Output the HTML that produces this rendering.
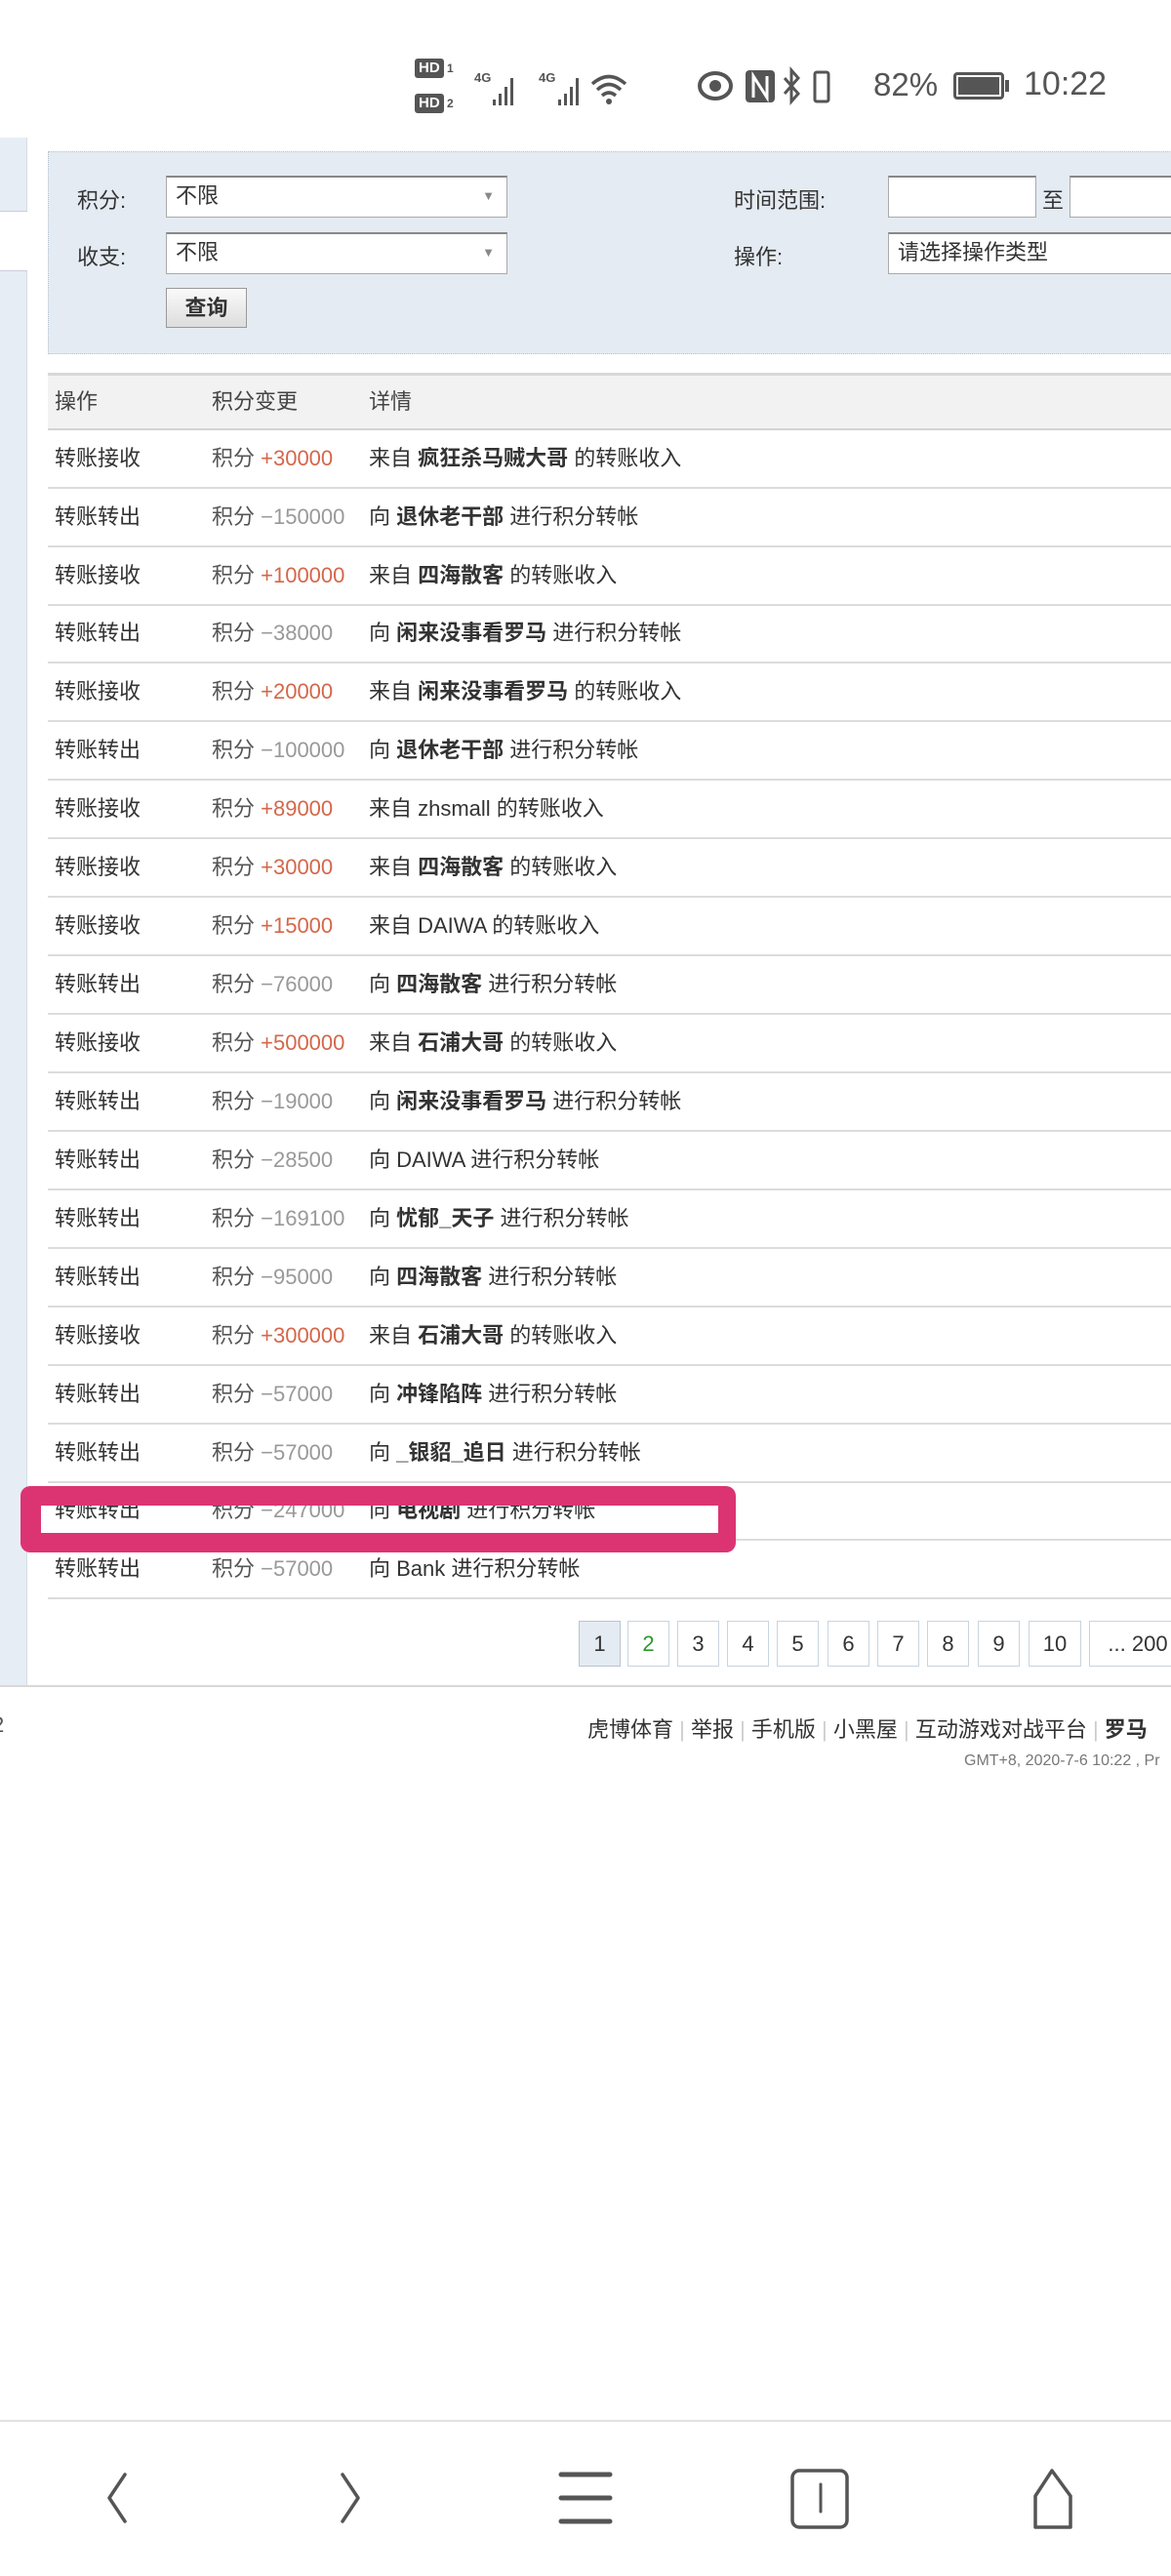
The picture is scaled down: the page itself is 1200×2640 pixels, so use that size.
<!DOCTYPE html>
<html><head><meta charset="utf-8"><style>
*{margin:0;padding:0;box-sizing:border-box}
body{width:1200px;height:2640px;background:#fff;position:relative;overflow:hidden;font-family:"Liberation Sans","Noto Sans CJK SC",sans-serif;color:#333}
.abs{position:absolute}
.strip{left:0;top:141px;width:28px;height:1588px;background:#e6edf5;border-right:1px solid #d5dde6}
.filter{left:49px;top:155px;width:1160px;height:208px;background:#e4ebf2;border:1px dotted #b8c4d0}
.lbl{font-size:22px;color:#333}
.sel{background:#fff;border:1px solid #aaa;border-top:2px solid #888;font-size:22px;padding-left:9px;line-height:38px}
.btn{left:170px;top:295px;width:83px;height:41px;border:1px solid #999;background:linear-gradient(#fafafa,#ddd);font-size:22px;font-weight:bold;text-align:center;line-height:39px}
.thead{left:49px;top:382px;width:1160px;height:59px;background:#f2f2f2;border-top:3px solid #d8d8d8;border-bottom:2px solid #d4d4d4;font-size:22px;color:#444}
.row{position:absolute;left:49px;width:1160px;height:59.9px;border-bottom:2px solid #dcdcdc;font-size:22px}
.c{position:absolute;top:0;line-height:58px;white-space:nowrap}
.c1{left:7px}.c2{left:168px;color:#555}.c3{left:329px}
.p{color:#d4674a}.m{color:#999}
b{color:#333}
.pg{position:absolute;top:1661px;height:47px;border:1px solid #c8d4e0;font-size:22px;text-align:center;line-height:45px;background:#fff}
</style></head><body>

<!-- status bar -->
<div class="abs" style="left:425px;top:60px;font-size:15px;font-weight:bold;color:#555">
<div style="border:2px solid #555;border-radius:3px;padding:0 2px;line-height:16px;display:inline-block;background:#555;color:#fff">HD</div><span style="font-size:12px"> 1</span></div>
<div class="abs" style="left:425px;top:96px;font-size:15px;font-weight:bold;color:#555">
<div style="border:2px solid #555;border-radius:3px;padding:0 2px;line-height:16px;display:inline-block;background:#555;color:#fff">HD</div><span style="font-size:12px"> 2</span></div>
<svg class="abs" style="left:484px;top:66px" width="190" height="46" viewBox="0 0 190 46">
<text x="2" y="18" font-size="13" fill="#555" font-family="Liberation Sans" font-weight="bold">4G</text>
<rect x="21" y="36" width="3" height="6" fill="#555"/><rect x="27" y="30" width="3" height="12" fill="#555"/><rect x="33" y="23" width="3" height="19" fill="#555"/><rect x="39" y="14" width="3" height="28" fill="#555"/>
<text x="68" y="18" font-size="13" fill="#555" font-family="Liberation Sans" font-weight="bold">4G</text>
<rect x="88" y="36" width="3" height="6" fill="#555"/><rect x="94" y="30" width="3" height="12" fill="#555"/><rect x="100" y="23" width="3" height="19" fill="#555"/><rect x="106" y="14" width="3" height="28" fill="#555"/>
<path d="M123 20 Q140 5 157 20 M128 26 Q140 15 152 26 M133 32 Q140 26 147 32" stroke="#555" stroke-width="3.5" fill="none"/><circle cx="140" cy="38" r="3" fill="#555"/>
</svg>
<svg class="abs" style="left:714px;top:68px" width="140" height="42" viewBox="0 0 140 42">
<ellipse cx="19" cy="20" rx="16" ry="13" stroke="#555" stroke-width="4" fill="none"/><circle cx="19" cy="20" r="6" fill="#555"/>
<rect x="50" y="4" width="30" height="33" rx="4" fill="#555"/><path d="M58 32 V10 L72 32 V10" stroke="#fff" stroke-width="3" fill="none"/>
<path d="M90 12 L104 28 L97 36 V4 L104 12 L90 28" stroke="#555" stroke-width="3" fill="none"/>
<rect x="121" y="6" width="14" height="30" rx="2" stroke="#555" stroke-width="3" fill="none"/>
</svg>
<div class="abs" style="left:895px;top:68px;font-size:33px;color:#555">82%</div>
<div class="abs" style="left:977px;top:74px;width:52px;height:28px;border:3px solid #555;border-radius:4px;padding:2px"><div style="background:#555;width:100%;height:100%"></div></div>
<div class="abs" style="left:1030px;top:82px;width:4px;height:12px;background:#555"></div>
<div class="abs" style="left:1049px;top:67px;font-size:34px;color:#555">10:22</div>

<!-- left strip -->
<div class="abs strip"></div>
<div class="abs" style="left:0;top:216px;width:28px;height:62px;background:#fff;border-top:1px solid #ccd;border-bottom:1px solid #ccd"></div>

<!-- filter -->
<div class="abs filter"></div>
<div class="abs lbl" style="left:79px;top:188px">积分:</div>
<div class="abs sel" style="left:170px;top:180px;width:350px;height:43px">不限<span style="position:absolute;right:12px;top:0;font-size:13px;color:#888">▼</span></div>
<div class="abs lbl" style="left:79px;top:246px">收支:</div>
<div class="abs sel" style="left:170px;top:238px;width:350px;height:43px">不限<span style="position:absolute;right:12px;top:0;font-size:13px;color:#888">▼</span></div>
<div class="abs btn">查询</div>
<div class="abs lbl" style="left:752px;top:188px">时间范围:</div>
<div class="abs sel" style="left:910px;top:180px;width:152px;height:43px"></div>
<div class="abs lbl" style="left:1068px;top:188px">至</div>
<div class="abs sel" style="left:1096px;top:180px;width:120px;height:43px"></div>
<div class="abs lbl" style="left:752px;top:246px">操作:</div>
<div class="abs sel" style="left:910px;top:238px;width:300px;height:43px">请选择操作类型</div>

<!-- table -->
<div class="abs thead"><span class="c c1" style="line-height:54px">操作</span><span class="c" style="left:168px;line-height:54px">积分变更</span><span class="c c3" style="line-height:54px">详情</span></div>

<div class="row" style="top:441px"><span class="c c1">转账接收</span><span class="c c2">积分 <span class="p">+30000</span></span><span class="c c3">来自 <b>疯狂杀马贼大哥</b> 的转账收入</span></div>
<div class="row" style="top:501px"><span class="c c1">转账转出</span><span class="c c2">积分 <span class="m">−150000</span></span><span class="c c3">向 <b>退休老干部</b> 进行积分转帐</span></div>
<div class="row" style="top:561px"><span class="c c1">转账接收</span><span class="c c2">积分 <span class="p">+100000</span></span><span class="c c3">来自 <b>四海散客</b> 的转账收入</span></div>
<div class="row" style="top:620px"><span class="c c1">转账转出</span><span class="c c2">积分 <span class="m">−38000</span></span><span class="c c3">向 <b>闲来没事看罗马</b> 进行积分转帐</span></div>
<div class="row" style="top:680px"><span class="c c1">转账接收</span><span class="c c2">积分 <span class="p">+20000</span></span><span class="c c3">来自 <b>闲来没事看罗马</b> 的转账收入</span></div>
<div class="row" style="top:740px"><span class="c c1">转账转出</span><span class="c c2">积分 <span class="m">−100000</span></span><span class="c c3">向 <b>退休老干部</b> 进行积分转帐</span></div>
<div class="row" style="top:800px"><span class="c c1">转账接收</span><span class="c c2">积分 <span class="p">+89000</span></span><span class="c c3">来自 zhsmall 的转账收入</span></div>
<div class="row" style="top:860px"><span class="c c1">转账接收</span><span class="c c2">积分 <span class="p">+30000</span></span><span class="c c3">来自 <b>四海散客</b> 的转账收入</span></div>
<div class="row" style="top:920px"><span class="c c1">转账接收</span><span class="c c2">积分 <span class="p">+15000</span></span><span class="c c3">来自 DAIWA 的转账收入</span></div>
<div class="row" style="top:980px"><span class="c c1">转账转出</span><span class="c c2">积分 <span class="m">−76000</span></span><span class="c c3">向 <b>四海散客</b> 进行积分转帐</span></div>
<div class="row" style="top:1040px"><span class="c c1">转账接收</span><span class="c c2">积分 <span class="p">+500000</span></span><span class="c c3">来自 <b>石浦大哥</b> 的转账收入</span></div>
<div class="row" style="top:1100px"><span class="c c1">转账转出</span><span class="c c2">积分 <span class="m">−19000</span></span><span class="c c3">向 <b>闲来没事看罗马</b> 进行积分转帐</span></div>
<div class="row" style="top:1160px"><span class="c c1">转账转出</span><span class="c c2">积分 <span class="m">−28500</span></span><span class="c c3">向 DAIWA 进行积分转帐</span></div>
<div class="row" style="top:1220px"><span class="c c1">转账转出</span><span class="c c2">积分 <span class="m">−169100</span></span><span class="c c3">向 <b>忧郁_天子</b> 进行积分转帐</span></div>
<div class="row" style="top:1280px"><span class="c c1">转账转出</span><span class="c c2">积分 <span class="m">−95000</span></span><span class="c c3">向 <b>四海散客</b> 进行积分转帐</span></div>
<div class="row" style="top:1340px"><span class="c c1">转账接收</span><span class="c c2">积分 <span class="p">+300000</span></span><span class="c c3">来自 <b>石浦大哥</b> 的转账收入</span></div>
<div class="row" style="top:1400px"><span class="c c1">转账转出</span><span class="c c2">积分 <span class="m">−57000</span></span><span class="c c3">向 <b>冲锋陷阵</b> 进行积分转帐</span></div>
<div class="row" style="top:1460px"><span class="c c1">转账转出</span><span class="c c2">积分 <span class="m">−57000</span></span><span class="c c3">向 <b>_银貂_追日</b> 进行积分转帐</span></div>
<div class="row" style="top:1519px"><span class="c c1">转账转出</span><span class="c c2">积分 <span class="m">−247000</span></span><span class="c c3">向 <b>电视剧</b> 进行积分转帐</span></div>
<div class="row" style="top:1579px"><span class="c c1">转账转出</span><span class="c c2">积分 <span class="m">−57000</span></span><span class="c c3">向 Bank 进行积分转帐</span></div>

<!-- highlight -->
<div class="abs" style="left:21px;top:1523px;width:733px;height:68px;border:solid #dc3473;border-width:20px 18px 20px 21px;border-radius:10px"></div>

<!-- pagination -->
<div class="pg" style="left:593px;width:43px;background:#e4ebf2;border-color:#b8c4d0">1</div>
<div class="pg" style="left:643px;width:43px;color:#2a9a2a">2</div>
<div class="pg" style="left:694px;width:43px">3</div>
<div class="pg" style="left:745px;width:43px">4</div>
<div class="pg" style="left:796px;width:43px">5</div>
<div class="pg" style="left:848px;width:43px">6</div>
<div class="pg" style="left:899px;width:43px">7</div>
<div class="pg" style="left:950px;width:43px">8</div>
<div class="pg" style="left:1002px;width:43px">9</div>
<div class="pg" style="left:1054px;width:54px">10</div>
<div class="pg" style="left:1116px;width:100px">... 200</div>

<!-- footer -->
<div class="abs" style="left:0;top:1727px;width:1200px;height:2px;background:#d8d8d8"></div>
<div class="abs" style="left:-8px;top:1755px;font-size:22px;color:#555">2</div>
<div class="abs" style="left:602px;top:1755px;font-size:22px;color:#333;white-space:nowrap">虎博体育 <span style="color:#ccc">|</span> 举报 <span style="color:#ccc">|</span> 手机版 <span style="color:#ccc">|</span> 小黑屋 <span style="color:#ccc">|</span> 互动游戏对战平台 <span style="color:#ccc">|</span> <b>罗马</b></div>
<div class="abs" style="left:988px;top:1796px;font-size:16px;color:#777;white-space:nowrap">GMT+8, 2020-7-6 10:22 , Pr</div>

<!-- bottom nav -->
<div class="abs" style="left:0;top:2480px;width:1200px;height:2px;background:#e2e2e2"></div>
<svg class="abs" style="left:0;top:2520px" width="1200" height="80" viewBox="0 0 1200 80">
<g stroke="#555" stroke-width="3.5" fill="none" stroke-linecap="round" stroke-linejoin="round">
<path d="M128 16 L112 40 L128 64"/>
<path d="M351 16 L367 40 L351 64"/>
<path d="M575 16 H625 M575 40 H625 M575 64 H625" stroke-width="5"/>
<rect x="812" y="12" width="56" height="58" rx="7"/>
<path d="M841 26 V54" stroke-width="3"/>
<path d="M1078 12 L1097 38 V70 H1061 V38 Z"/>
</g></svg>
</body></html>
